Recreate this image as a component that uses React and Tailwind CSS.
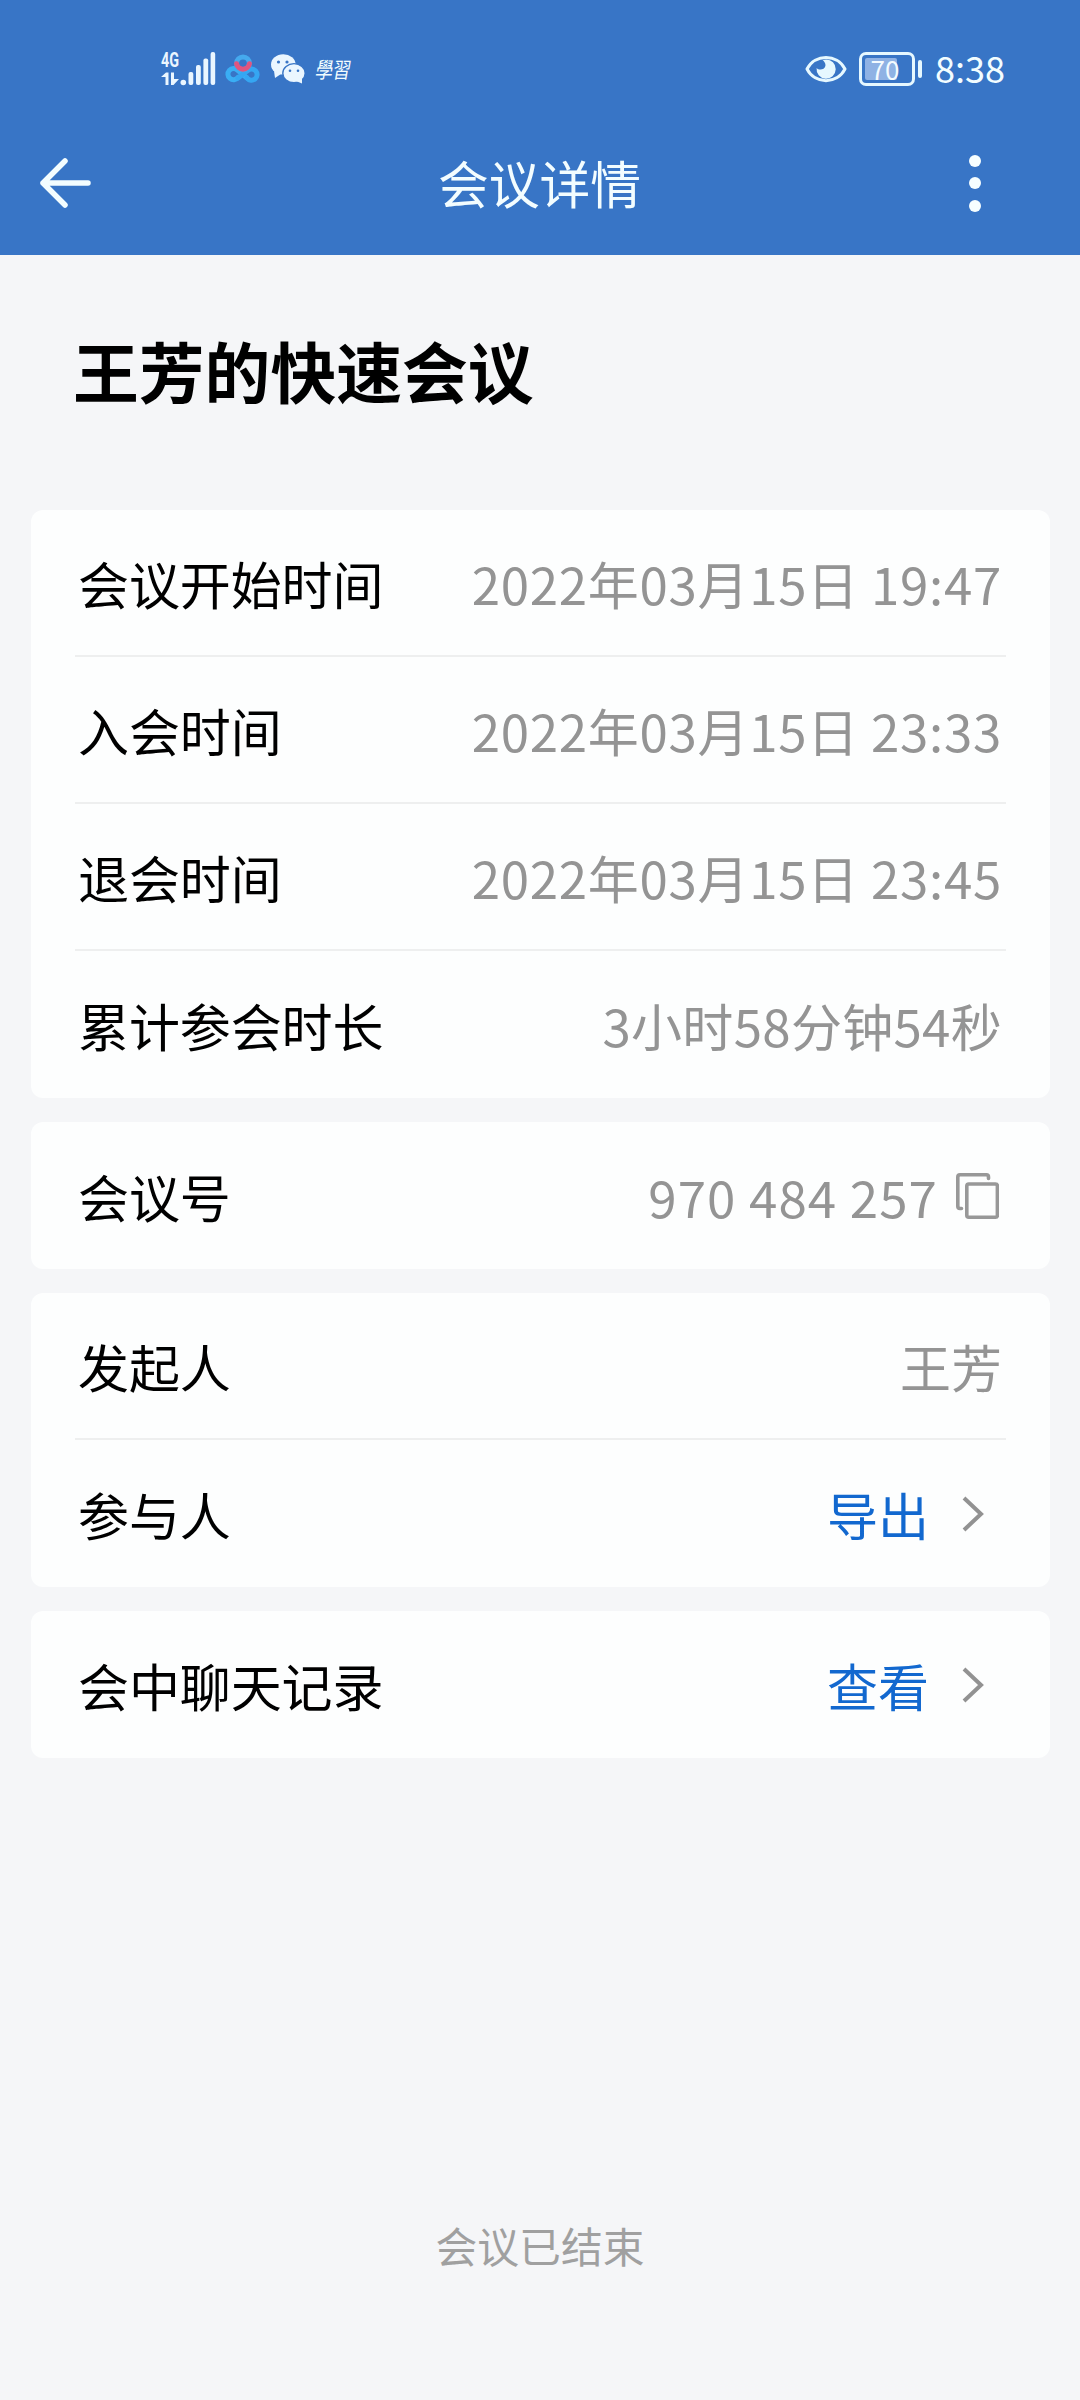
import React from 'react';

const timeRows = [
  { label: '会议开始时间', value: '2022年03月15日 19:47' },
  { label: '入会时间', value: '2022年03月15日 23:33' },
  { label: '退会时间', value: '2022年03月15日 23:45' },
  { label: '累计参会时长', value: '3小时58分钟54秒', spacing: 'tracking-[0.3px]' },
];

const SignalIcon = () => (
  <svg className="w-[54px] h-[36px] overflow-visible" viewBox="0 0 54 36" fill="#eaf6ff">
    <text x="0" y="16" fontSize="20" fontWeight="700" fontFamily="Roboto, sans-serif" textLength="18" lengthAdjust="spacingAndGlyphs">4G</text>
    <path d="M0 26 L5 21.5 H7.5 V34 H4.5 V26 Z" />
    <path d="M10 21.5 H13 V28 H18 L12.5 34 H10 Z" />
    <circle cx="22.3" cy="31.5" r="2.8" />
    <rect x="27.5" y="21" width="4.8" height="13" rx="2" />
    <rect x="35" y="14" width="4.8" height="20" rx="2" />
    <rect x="42.4" y="7.5" width="4.8" height="26.5" rx="2" />
    <rect x="49.6" y="1" width="4.6" height="33" rx="2" />
  </svg>
);

const CloudIcon = () => (
  <svg className="w-[36px] h-[30px]" viewBox="0 0 36 30" fill="none" strokeWidth="5" strokeLinecap="round">
    <path d="M13 23.5 A5.6 5.6 0 1 1 12.5 16.2 L22 24" stroke="#3aaef4" />
    <path d="M13 24 L22.6 16.6 A5.6 5.6 0 1 1 22 24" stroke="#35a6f2" />
    <circle cx="18" cy="9.4" r="6.4" stroke="#45a9ee" />
    <path d="M11.6 9.8 A6.5 6.5 0 0 0 24.4 9.8" stroke="#e0557f" />
  </svg>
);

const ChatIcon = () => (
  <svg className="w-[34px] h-[30px]" viewBox="0 0 34 30" fill="#eaf6ff">
    <ellipse cx="12.3" cy="10.5" rx="12.3" ry="10.2" />
    <path d="M3 17 L4 24 L10 20 Z" />
    <ellipse cx="23" cy="19.2" rx="11.2" ry="9.6" stroke="#3875c6" strokeWidth="1.4" />
    <path d="M25 27 L31 29.5 L31 23 Z" />
    <g fill="#3875c6">
      <circle cx="7.5" cy="8" r="1.6" />
      <circle cx="16" cy="8" r="1.6" />
      <circle cx="19" cy="16.8" r="1.3" />
      <circle cx="27" cy="16.8" r="1.3" />
    </g>
  </svg>
);

const EyeIcon = () => (
  <svg className="w-[42px] h-[28px]" viewBox="0 0 42 28" fill="none">
    <path d="M2 14 C10 -1.5 32 -1.5 40 14 C32 29.5 10 29.5 2 14 Z" stroke="#e6f8ff" strokeWidth="3" strokeLinejoin="round" />
    <path d="M21 4.5 A9.6 9.6 0 1 1 11.6 13 C14 15.8 19.6 14.8 20.4 11 C20.9 8.4 19 6 17.5 5.3 Z" fill="#e6f8ff" />
  </svg>
);

const BatteryIcon = () => (
  <div className="flex items-center">
    <div className="w-[56px] h-[34px] rounded-[7px] border-3 border-[#e6f8ff] p-[3px]">
      <div className="w-[32px] h-[22px] rounded-[2px] bg-[#8fb2e4] flex items-center pl-[6px]">
        <span className="text-[26px] leading-[38px] text-[#f4fbff] -mt-[1px]">70</span>
      </div>
    </div>
    <div className="ml-[3px] w-[4.5px] h-[18px] rounded-[2px] bg-[#e6f8ff]" />
  </div>
);

const CopyIcon = () => (
  <svg className="w-[43px] h-[46px] ml-[18px] mr-[3px]" viewBox="0 0 43 46" fill="none" stroke="#989898" strokeWidth="3.6">
    <path d="M5.5 35.5 H4 Q1.8 35.5 1.8 33.3 V4 Q1.8 1.8 4 1.8 H30.4 Q32.5 1.8 32.5 4 V5.5" strokeLinecap="round" />
    <rect x="10.8" y="11" width="30.6" height="33.2" rx="2" />
  </svg>
);

const Chevron = () => (
  <svg className="w-[24px] h-[38px] ml-[32px] mr-[17px]" viewBox="0 0 24 38" fill="none" stroke="#929292" strokeWidth="4">
    <path d="M3 3 L20 19 L3 35" />
  </svg>
);

const Card = ({ children }) => (
  <div className="bg-[#fdfefe] rounded-[12px] px-11 divide-y-2 divide-[#eeefef]">{children}</div>
);

const Row = ({ label, children }) => (
  <div className="h-[147px] flex items-center justify-between pl-[3px] pr-[4px]">
    <span className="text-black tracking-[-0.1px] pt-[1px]">{label}</span>
    <div className="flex items-center text-[#949494] pt-[1px]">{children}</div>
  </div>
);

const App = () => {
  return (
    <div className="w-[1080px] h-[2400px] flex flex-col bg-[#f5f6f8] font-['Noto_Sans_CJK_SC',sans-serif] text-[51px] leading-[74px] whitespace-nowrap">
      <div className="h-[255px] bg-[#3875c6] text-[#f3fdff]">
        {/* Status bar */}
        <div className="h-[111px] pt-[27px] pl-[161px] pr-[75px] flex items-center justify-between">
          <div className="flex items-center">
            <SignalIcon />
            <div className="ml-[10px]"><CloudIcon /></div>
            <div className="ml-[10px]"><ChatIcon /></div>
            <div className="ml-[11px] font-['Noto_Sans_CJK_TC',sans-serif] text-[17.5px] leading-[28px] -skew-x-12 scale-y-125">學習</div>
          </div>
          <div className="flex items-center">
            <EyeIcon />
            <div className="ml-[12px]"><BatteryIcon /></div>
            <div className="ml-[13px] -mt-[4px] text-[36px] leading-[44px]">8:38</div>
          </div>
        </div>

        {/* Title bar */}
        <div className="h-[144px] flex items-center justify-between pl-[39px] pr-[99px]">
          <svg className="w-[53px] h-[52px]" viewBox="0 0 53 52" fill="none" stroke="#f3fdff" strokeWidth="5.5" strokeLinecap="round" strokeLinejoin="round">
            <path d="M26 4 L4 26 L26 48 M4 26 H49" />
          </svg>
          <div className="text-[50.8px] pl-[18px] -mt-[3px]">会议详情</div>
          <div className="flex flex-col gap-[10.5px]">
            <div className="size-3 rounded-full bg-[#f6feff]" />
            <div className="size-3 rounded-full bg-[#f6feff]" />
            <div className="size-3 rounded-full bg-[#f6feff]" />
          </div>
        </div>
      </div>

      <h1 className="h-[255px] pt-[67px] pl-[73px] text-[65.8px] leading-[96px] font-bold text-black">王芳的快速会议</h1>

      <div className="pl-[31px] pr-[30px] flex flex-col gap-6">
        <Card>
          {timeRows.map(row => (
            <Row key={row.label} label={row.label}>
              <span className={row.spacing || 'tracking-[0.7px]'}>{row.value}</span>
            </Row>
          ))}
        </Card>
        <Card>
          <Row label="会议号">
            <span className="tracking-[1.1px]">970 484 257</span>
            <CopyIcon />
          </Row>
        </Card>
        <Card>
          <Row label="发起人">王芳</Row>
          <Row label="参与人">
            <span className="text-[#1268cf]">导出</span>
            <Chevron />
          </Row>
        </Card>
        <Card>
          <Row label="会中聊天记录">
            <span className="text-[#1268cf]">查看</span>
            <Chevron />
          </Row>
        </Card>
      </div>

      <div className="mt-auto mb-[125px] text-center text-[41.8px] leading-[60px] text-[#a0a0a0]">会议已结束</div>
    </div>
  );
};

export default App;
